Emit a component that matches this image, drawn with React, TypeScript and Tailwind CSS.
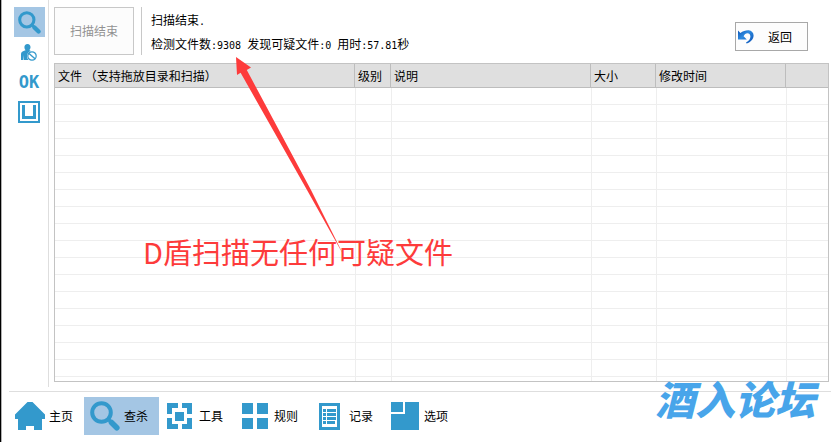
import type { ReactNode } from 'react';
import clsx from 'clsx';

interface NavItem {
  id: string;
  label: string;
  icon: ReactNode;
}

interface Column {
  label: string;
  width?: string;
}

const columns: Column[] = [
  { label: '文件 （支持拖放目录和扫描）', width: 'w-[300px]' },
  { label: '级别', width: 'w-9' },
  { label: '说明', width: 'w-[200px]' },
  { label: '大小', width: 'w-[65px]' },
  { label: '修改时间', width: 'w-[130px]' },
  { label: '' },
];

const EMPTY_ROWS = 17;

function SearchIcon({ size }: { size: number }) {
  return (
    <svg width={size} height={size} viewBox="0 0 30 30" fill="none" stroke="currentColor">
      <circle cx="11.500" cy="11.500" r="9.300" strokeWidth="4" />
      <path d="M18 18l4 4" strokeWidth="3.600" />
      <path d="M21.500 21.500l5.300 5.300" strokeWidth="5.600" strokeLinecap="round" />
    </svg>
  );
}

function UserBlockIcon() {
  return (
    <svg width="16" height="17" viewBox="0 0 16 17" fill="currentColor">
      <path d="M6.500 0C8.500 0 9.500 1.500 9.500 3.200 9.500 4.400 9 5.200 8.300 6L9.800 7C7.500 7.800 6 9.700 6 12 6 13.600 6.600 15 7.600 16H3V11L2.400 16H0V10C0 8 1.500 7.200 4.600 6.200 3.800 5.400 3.400 4.400 3.400 3.200 3.400 1.500 4.500 0 6.500 0z" />
      <circle cx="11" cy="12" r="4.200" fill="none" stroke="currentColor" strokeWidth="1.200" />
      <path d="M8 9.400l6 5.400" stroke="currentColor" strokeWidth="1.400" />
    </svg>
  );
}

function TrayIcon() {
  return (
    <svg width="22" height="22" viewBox="0 0 22 22" fill="currentColor" shapeRendering="crispEdges">
      <path fillRule="evenodd" d="M0 0h22v22H0zM2 2v18h18V2z" />
      <path d="M4 4h3v11h8V4h3v14H4z" />
    </svg>
  );
}

function HomeIcon() {
  return (
    <svg width="30" height="28" viewBox="0 0 30 28" fill="currentColor">
      <path d="M12.500 0h5L30 12.500V17h-3v11h-8v-4h-8v4H3V17H0v-4.500z" />
    </svg>
  );
}

function ToolIcon() {
  return (
    <svg width="26" height="26" viewBox="0 0 26 26" fill="currentColor" shapeRendering="crispEdges">
      <path d="M0 0h11v5H5v6H0zM15 0h10v11h-5V5h-5zM0 15h5v6h6v5H0zM20 15h5v11H15v-5h5z" />
      <path d="M8 9h9v9H8z" />
    </svg>
  );
}

function RuleIcon() {
  return (
    <svg width="26" height="26" viewBox="0 0 26 26" fill="currentColor" shapeRendering="crispEdges">
      <path d="M0 0h11v11H0zM15 0h11v11H15zM0 15h11v11H0zM15 15h11v11H15z" />
    </svg>
  );
}

function LogIcon() {
  return (
    <svg width="22" height="28" viewBox="0 0 22 28" fill="currentColor" shapeRendering="crispEdges">
      <path fillRule="evenodd" d="M0 1h21v27H0zM3 4v21h15V4z" />
      <path d="M4 7h3v3H4zM8 7h9v3H8zM4 11h3v3H4zM8 11h9v3H8zM4 15h3v3H4zM8 15h9v3H8zM4 19h3v3H4zM8 19h8v3H8z" />
    </svg>
  );
}

function OptionIcon() {
  return (
    <svg width="28" height="28" viewBox="0 0 28 28" fill="currentColor" shapeRendering="crispEdges">
      <path d="M0 0h12v10H0zM14 0h14v28H0V12h14z" />
    </svg>
  );
}

function UndoIcon() {
  return (
    <svg width="16" height="14" viewBox="0 0 16 14">
      <defs>
        <linearGradient id="undo" x1="0" y1="0" x2="1" y2="1">
          <stop offset="0" stopColor="#0d56b8" />
          <stop offset="0.4" stopColor="#2f8be0" />
          <stop offset="1" stopColor="#0a4fb4" />
        </linearGradient>
      </defs>
      <path
        d="M0 .5L2.400 3C5 1 8 0 10.800.2 13.500.5 15.600 2.600 15.600 5.400 15.600 9 12.800 12 8.600 13.600L8 12.600C10.800 11 12.400 9 12.400 6.500 12.400 4.400 11.200 3.200 9.500 3.200 7.800 3.200 6.400 4.400 5.600 6.200L8.800 9.400H0z"
        fill="url(#undo)"
      />
    </svg>
  );
}

const sideItems: NavItem[] = [
  { id: 'scan', label: '扫描', icon: <SearchIcon size={23} /> },
  { id: 'user', label: '用户', icon: <UserBlockIcon /> },
  {
    id: 'ok',
    label: 'OK',
    icon: <span className="font-['DejaVu_Sans_Mono',monospace] text-[17px] leading-none font-bold">OK</span>,
  },
  { id: 'tray', label: '隔离', icon: <TrayIcon /> },
];

const tabs: NavItem[] = [
  { id: 'home', label: '主页', icon: <HomeIcon /> },
  { id: 'kill', label: '查杀', icon: <SearchIcon size={30} /> },
  { id: 'tool', label: '工具', icon: <ToolIcon /> },
  { id: 'rule', label: '规则', icon: <RuleIcon /> },
  { id: 'log', label: '记录', icon: <LogIcon /> },
  { id: 'option', label: '选项', icon: <OptionIcon /> },
];

function Num({ children }: { children: ReactNode }) {
  return (
    <span className="font-['DejaVu_Sans_Mono',monospace] text-[10px] leading-none">{children}</span>
  );
}

function Sidebar() {
  return (
    <nav className="flex w-[47px] shrink-0 flex-col items-end border-r border-[#dedede] pt-[7px] pr-[3px]">
      {sideItems.map((item) => (
        <button
          key={item.id}
          aria-label={item.label}
          className={clsx(
            'flex h-[30px] w-[31px] items-center justify-center pr-px text-[#3399cc]',
            item.id === 'scan' && 'bg-[#a4c6e4]',
          )}
        >
          {item.icon}
        </button>
      ))}
    </nav>
  );
}

function ScanHeader() {
  return (
    <header className="flex h-[63px] items-start pt-[7px]">
      <button disabled className="h-12 w-20 border border-[#c8c8c8] bg-[#fcfcfc] text-[#929292]">
        扫描结束
      </button>
      <div className="ml-[7px] h-12 border-l border-[#c8c8c8] pt-px pl-[9px] leading-6 whitespace-nowrap">
        <p>
          扫描结束<Num>.</Num>
        </p>
        <p>
          检测文件数<Num>:9308 </Num>发现可疑文件<Num>:0 </Num>用时<Num>:57.81</Num>秒
        </p>
      </div>
      <button className="mt-[15px] mr-[21px] ml-auto flex h-[29px] w-[73px] items-center gap-[14px] border border-[#a8a8a8] bg-[#fdfdfd] pl-0.5">
        <UndoIcon />
        返回
      </button>
    </header>
  );
}

function ResultTable() {
  return (
    <div className="border border-[#c3c3c3]">
      <table className="w-full table-fixed border-separate border-spacing-0">
        <thead>
          <tr className="h-6">
            {columns.map((col, idx) => (
              <th
                key={idx}
                className={clsx(
                  'border-b border-[#bdbdbd] bg-[#dfdfdf] px-[3px] py-0 text-left leading-5 font-normal whitespace-nowrap',
                  idx < columns.length - 1 && 'border-r',
                  col.width,
                )}
              >
                {col.label}
              </th>
            ))}
          </tr>
        </thead>
        <tbody>
          {Array.from({ length: EMPTY_ROWS }, (_, row) => (
            <tr key={row} className="h-[17px]">
              {columns.map((_, idx) => (
                <td
                  key={idx}
                  className={clsx('border-b border-[#eeeeee] p-0', idx > 0 && 'border-l')}
                />
              ))}
            </tr>
          ))}
          <tr className="h-1">
            {columns.map((_, idx) => (
              <td key={idx} className={clsx('border-[#eeeeee] p-0', idx > 0 && 'border-l')} />
            ))}
          </tr>
        </tbody>
      </table>
    </div>
  );
}

function TabBar() {
  return (
    <nav className="mt-1 ml-[7px] flex border-t border-[#dedede] pt-[5px]">
      {tabs.map((tab) => (
        <button
          key={tab.id}
          className={clsx(
            'flex h-[38px] w-[75px] items-center gap-0.5 pl-1 whitespace-nowrap',
            tab.id === 'kill' && 'bg-[#a4c6e4]',
          )}
        >
          <span className="flex w-[34px] justify-center text-[#3399cc]">{tab.icon}</span>
          {tab.label}
        </button>
      ))}
    </nav>
  );
}

// red arrow and caption drawn on top of the window
function Annotation() {
  return (
    <div className="pointer-events-none absolute top-[57px] left-[142px] text-[#fd3b3b]">
      <svg className="ml-[93px]" width="110" height="200" viewBox="0 0 110 200" fill="currentColor">
        <path d="M0 0L15 10.500 10.800 13 75 133 108 199 71 133 4.600 15.800 1 18z" />
      </svg>
      <p className="-mt-[26px] text-[29px] leading-10 whitespace-nowrap">D盾扫描无任何可疑文件</p>
    </div>
  );
}

export default function App() {
  return (
    <div className="relative min-h-screen border-l border-black bg-white font-['Noto_Sans_CJK_SC',sans-serif] text-xs text-black">
      <div className="min-h-screen border-l border-[#b0b0b0]">
        <div className="flex">
          <Sidebar />
          <main className="min-w-0 flex-1 pr-0.5 pb-[5px] pl-[5px]">
            <ScanHeader />
            <ResultTable />
          </main>
        </div>
        <TabBar />
      </div>
      <Annotation />
      <div className="pointer-events-none absolute right-4 bottom-6 text-[40px] leading-10 font-black text-[#48a5ea] italic">
        酒入论坛
      </div>
    </div>
  );
}
